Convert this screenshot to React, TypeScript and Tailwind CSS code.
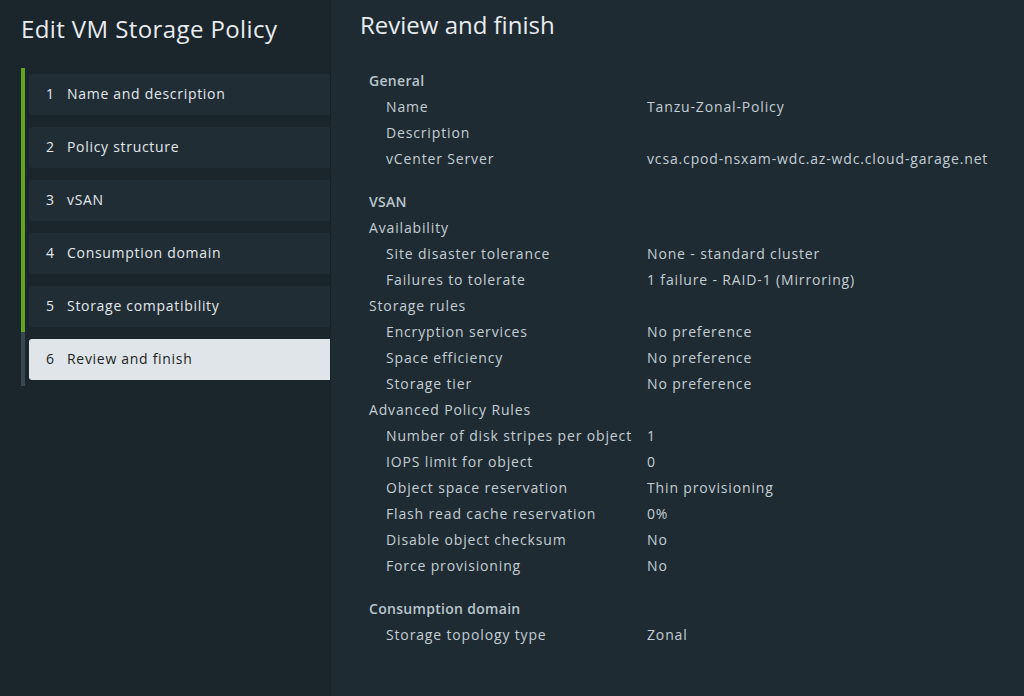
import React from 'react';

type Row = { label: string; value?: string; kind: 'section' | 'group' | 'item'; gap?: boolean };

const steps = [
  'Name and description',
  'Policy structure',
  'vSAN',
  'Consumption domain',
  'Storage compatibility',
  'Review and finish',
];

const rows: Row[] = [
  { label: 'General', kind: 'section' },
  { label: 'Name', value: 'Tanzu-Zonal-Policy', kind: 'item' },
  { label: 'Description', value: '', kind: 'item' },
  { label: 'vCenter Server', value: 'vcsa.cpod-nsxam-wdc.az-wdc.cloud-garage.net', kind: 'item' },
  { label: 'VSAN', kind: 'section', gap: true },
  { label: 'Availability', kind: 'group' },
  { label: 'Site disaster tolerance', value: 'None - standard cluster', kind: 'item' },
  { label: 'Failures to tolerate', value: '1 failure - RAID-1 (Mirroring)', kind: 'item' },
  { label: 'Storage rules', kind: 'group' },
  { label: 'Encryption services', value: 'No preference', kind: 'item' },
  { label: 'Space efficiency', value: 'No preference', kind: 'item' },
  { label: 'Storage tier', value: 'No preference', kind: 'item' },
  { label: 'Advanced Policy Rules', kind: 'group' },
  { label: 'Number of disk stripes per object', value: '1', kind: 'item' },
  { label: 'IOPS limit for object', value: '0', kind: 'item' },
  { label: 'Object space reservation', value: 'Thin provisioning', kind: 'item' },
  { label: 'Flash read cache reservation', value: '0%', kind: 'item' },
  { label: 'Disable object checksum', value: 'No', kind: 'item' },
  { label: 'Force provisioning', value: 'No', kind: 'item' },
  { label: 'Consumption domain', kind: 'section', gap: true },
  { label: 'Storage topology type', value: 'Zonal', kind: 'item' },
];

const StepItem = ({ n, label, active }: { n: number; label: string; active: boolean }) => (
  <div
    className={`h-[41px] flex items-center pl-[17px] pb-[3px] rounded-l-[3px] text-[14px] tracking-[0.7px] ${
      active ? 'bg-[#dfe5e9] text-[#1b1f22]' : 'bg-[#202d35] text-[#e3e8eb]'
    }`}
  >
    <span className="w-[21px]">{n}</span>
    <span>{label}</span>
  </div>
);

const App = () => {
  return (
    <div
      className="w-[1024px] h-[696px] flex bg-[#1b252c] overflow-hidden"
      style={{ fontFamily: '"Open Sans", "Liberation Sans", sans-serif' }}
    >
      {/* wizard steps */}
      <div className="w-[330px] shrink-0 pl-[21px] pt-[13px]">
        <h1 className="text-[24px] leading-[32px] text-[#e8ecee] tracking-[0.4px] mb-[23px]">
          Edit VM Storage Policy
        </h1>
        <div className="flex">
          <div className="w-[4px] shrink-0 flex flex-col">
            <div className="h-[264px] bg-[#62a420]" />
            <div className="h-[54px] bg-[#3a4750]" />
          </div>
          <div className="flex-1 pl-[4px] pt-[6px] flex flex-col gap-[12px]">
            {steps.map((s, i) => (
              <StepItem key={s} n={i + 1} label={s} active={i === steps.length - 1} />
            ))}
          </div>
        </div>
      </div>

      {/* review panel */}
      <div className="flex-1 bg-[#1f2b33] border-l border-[#182127] pl-[29px] pt-[10px]">
        <h2 className="text-[24px] leading-[30px] text-[#e8ecee] mb-[27px]">Review and finish</h2>
        <div className="pl-[9px] flex flex-col text-[14px] tracking-[0.85px] text-[#c3ced4]">
          {rows.map((r) => (
            <div
              key={r.label}
              className={`h-[26px] flex items-center ${r.gap ? 'mt-[17px]' : ''}`}
            >
              {r.kind === 'item' ? (
                <>
                  <span className="w-[278px] pl-[17px] shrink-0">{r.label}</span>
                  <span>{r.value}</span>
                </>
              ) : (
                <span className={r.kind === 'section' ? 'font-semibold tracking-[0.3px] text-[#b9c6cd]' : ''}>
                  {r.label}
                </span>
              )}
            </div>
          ))}
        </div>
      </div>
    </div>
  );
};

export default App;
